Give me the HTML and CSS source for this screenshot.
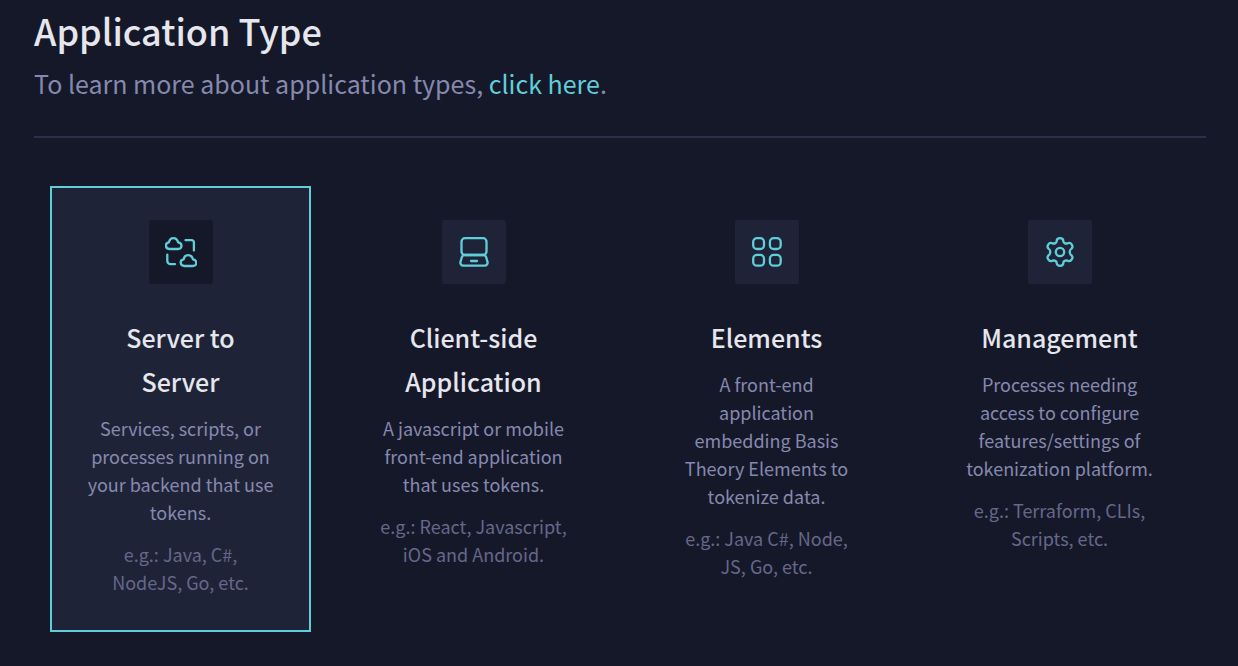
FILE: index.html
```html
<!DOCTYPE html>
<html lang="en">
<head>
<meta charset="utf-8">
<meta name="viewport" content="width=device-width, initial-scale=1">
<title>Application Type</title>
<link rel="stylesheet" href="styles.css">
</head>
<body>
<main class="page">
  <header class="page-header">
    <h1 class="page-title" id="page-title">Application Type</h1>
    <p class="page-lead">To learn more about application types, <a class="link" href="#types">click here</a>.</p>
  </header>
  <form class="types" id="types" role="radiogroup" aria-labelledby="page-title">
    <label class="card">
      <input class="card-input" type="radio" name="type" value="server" checked>
      <span class="card-icon">
        <svg viewBox="0 0 32 32" aria-hidden="true">
          <path d="M4.800 13C-.2 13-.2 7 3.800 6.400C5.200.6 11.600.6 13.200 6.400C17.800 7.200 17.400 13 13 13z"/>
          <path d="M19.600 30C14.600 30 14.600 24 18.600 23.400C20 17.600 26.400 17.600 28 23.400C32.600 24.200 32.200 30 27.800 30z"/>
          <path d="M20.500 4.200h6.200a2.200 2.200 0 0 1 2.200 2.200v8.200M10 28.200H5.600a3.300 3.300 0 0 1-3.300-3.300V18.600"/>
        </svg>
      </span>
      <span class="card-title">Server to<br>Server</span>
      <span class="card-text">Services, scripts, or processes running on your backend that use tokens.</span>
      <span class="card-example">e.g.: Java, C#,<br>NodeJS, Go, etc.</span>
    </label>
    <label class="card">
      <input class="card-input" type="radio" name="type" value="client">
      <span class="card-icon">
        <svg viewBox="0 0 32 32" aria-hidden="true">
          <rect x="3.500" y="2.200" width="25" height="16.800" rx="3.500"/>
          <path d="M6.500 19h19a3 3 0 0 1 2.600 2l1.400 4.900a2.900 2.900 0 0 1-2.800 3.700H5.300a2.900 2.900 0 0 1-2.800-3.700l1.400-4.900A3 3 0 0 1 6.500 19zM13 25h6"/>
        </svg>
      </span>
      <span class="card-title">Client-side Application</span>
      <span class="card-text">A javascript or mobile front-end application that uses tokens.</span>
      <span class="card-example">e.g.: React, Javascript, iOS and Android.</span>
    </label>
    <label class="card">
      <input class="card-input" type="radio" name="type" value="elements">
      <span class="card-icon">
        <svg viewBox="0 0 32 32" aria-hidden="true">
          <rect x="2.200" y="2.200" width="10.800" height="10.800" rx="3.800"/>
          <rect x="18.900" y="2.200" width="10.800" height="10.800" rx="3.800"/>
          <rect x="2.200" y="18.900" width="10.800" height="10.800" rx="3.800"/>
          <rect x="18.900" y="18.900" width="10.800" height="10.800" rx="3.800"/>
        </svg>
      </span>
      <span class="card-title">Elements</span>
      <span class="card-text">A front-end application embedding Basis Theory Elements to tokenize data.</span>
      <span class="card-example">e.g.: Java C#, Node,<br>JS, Go, etc.</span>
    </label>
    <label class="card">
      <input class="card-input" type="radio" name="type" value="management">
      <span class="card-icon">
        <svg viewBox="0 0 32 32" aria-hidden="true">
          <circle cx="16" cy="16" r="4.200"/>
          <path d="M12.700 5C12.700 1.200 19.300 1.200 19.300 5C19.300 6.900 21.300 8 23.600 7.300C27 5.600 30.200 10.600 27.200 12.900C25.200 14.200 25.200 17.800 27.200 19.100C30.200 21.400 27 26.400 23.600 24.700C21.300 24 19.300 25.100 19.300 27C19.300 30.800 12.700 30.800 12.700 27C12.700 25.100 10.700 24 8.400 24.700C5 26.400 1.800 21.400 4.800 19.100C6.800 17.800 6.800 14.200 4.800 12.900C1.800 10.600 5 5.600 8.400 7.300C10.700 8 12.700 6.900 12.700 5z"/>
        </svg>
      </span>
      <span class="card-title">Management</span>
      <span class="card-text">Processes needing access to configure features/settings of tokenization platform.</span>
      <span class="card-example">e.g.: Terraform, CLIs, Scripts, etc.</span>
    </label>
  </form>
</main>
</body>
</html>
```

FILE: styles.css
```css
:root {
  --bg: #151829;
  --surface: #1f2338;
  --line: #2b2f49;
  --accent: #60ced8;
  --heading: #e6e6ed;
  --text: #8689ae;
  --muted: #666789;
}

* {
  box-sizing: border-box;
}

body {
  margin: 0;
  background: var(--bg);
  color: var(--text);
  font-family: "Noto Sans CJK JP", "Open Sans", sans-serif;
}

.page {
  padding: 4px 32px 34px 34px;
}

.page-header {
  padding-bottom: 32px;
  border-bottom: 2px solid var(--line);
}

.page-title {
  margin: 0;
  color: var(--heading);
  font-size: 36px;
  line-height: 52px;
  font-weight: 500;
}

.page-lead {
  margin: 6px 0 0;
  font-size: 25px;
  line-height: 42px;
}

.link {
  color: var(--accent);
  text-decoration: none;
}

.types {
  display: grid;
  grid-template-columns: repeat(4, 1fr);
  gap: 32px;
  padding: 48px 16px 0;
}

.card {
  display: flex;
  flex-direction: column;
  align-items: center;
  padding: 32px 32px 34px;
  border: 2px solid transparent;
  text-align: center;
  cursor: pointer;
}

.card:has(:checked) {
  background: var(--surface);
  border-color: var(--accent);
}

.card-input {
  position: absolute;
  margin: 0;
  opacity: 0;
}

.card-icon {
  display: grid;
  place-items: center;
  width: 64px;
  height: 64px;
  margin-bottom: 31px;
  border-radius: 2px;
  background: var(--surface);
}

.card:has(:checked) .card-icon {
  background: var(--bg);
}

.card-icon svg {
  width: 32px;
  height: 32px;
  fill: none;
  stroke: var(--accent);
  stroke-width: 2.3;
  stroke-linecap: round;
  stroke-linejoin: round;
}

.card-title {
  color: var(--heading);
  font-size: 25px;
  line-height: 44px;
  font-weight: 500;
}

.card-text,
.card-example {
  font-size: 18px;
  line-height: 28px;
}

.card-text {
  margin-top: 11px;
}

.card-example {
  margin-top: 14px;
  color: var(--muted);
}
```
